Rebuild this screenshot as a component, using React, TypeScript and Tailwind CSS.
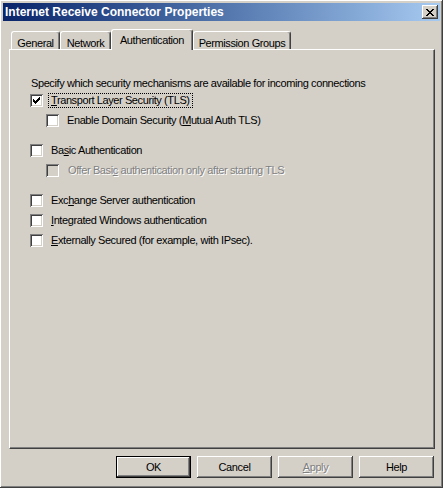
import React from "react";

const raised =
  "shadow-[inset_-1px_-1px_#404040,inset_1px_1px_#ffffff,inset_-2px_-2px_#808080,inset_2px_2px_#d4d0c8]";

function CloseGlyph() {
  const rows = ["11000011", "01100110", "00111100", "00011000", "00111100", "01100110", "11000011"];
  return (
    <svg width="8" height="7" viewBox="0 0 8 7" shapeRendering="crispEdges">
      {rows.map((r, y) =>
        r.split("").map((c, x) => (c === "1" ? <rect key={`${x}-${y}`} x={x} y={y} width="1" height="1" fill="#000" /> : null))
      )}
    </svg>
  );
}

function CheckGlyph({ color }: { color: string }) {
  const rows = ["0000001", "0000011", "1000111", "1101110", "1111100", "0111000", "0010000"];
  return (
    <svg width="7" height="7" viewBox="0 0 7 7" shapeRendering="crispEdges">
      {rows.map((r, y) =>
        r.split("").map((c, x) => (c === "1" ? <rect key={`${x}-${y}`} x={x} y={y} width="1" height="1" fill={color} /> : null))
      )}
    </svg>
  );
}

function Box({ checked = false, disabled = false }: { checked?: boolean; disabled?: boolean }) {
  return (
    <span
      className={`flex w-[13px] h-[13px] shrink-0 items-center justify-center shadow-[inset_1px_1px_#808080,inset_-1px_-1px_#ffffff,inset_2px_2px_#404040,inset_-2px_-2px_#d4d0c8] ${
        disabled ? "bg-[#d4d0c8]" : "bg-white"
      }`}
    >
      {checked && <CheckGlyph color={disabled ? "#808080" : "#000"} />}
    </span>
  );
}

function Tab({ label, width, active = false }: { label: string; width: string; active?: boolean }) {
  return (
    <div
      className={`${width} flex items-start justify-center border-l border-t border-r border-l-white border-t-white border-r-[#404040] rounded-t-[3px] shadow-[inset_-1px_0_#808080] bg-[#d4d0c8] ${
        active ? "relative z-10 h-[21px] -mb-[1px] pt-[2px]" : "h-[18px] pt-[3px]"
      }`}
    >
      {label}
    </div>
  );
}

export default function App() {
  return (
    <div
      className={`w-[443px] h-[488px] bg-[#d4d0c8] p-[3px] flex flex-col text-[11px] tracking-[-0.4px] text-black ${raised}`}
      style={{ fontFamily: '"Liberation Sans", Arial, sans-serif' }}
    >
      <div className="h-[18px] flex items-center justify-between bg-gradient-to-r from-[#0a246a] to-[#a6caf0] pl-[2px] pr-[2px]">
        <span className="font-bold text-white text-[12px] tracking-normal">Internet Receive Connector Properties</span>
        <span className={`w-[16px] h-[14px] flex items-center justify-center bg-[#d4d0c8] ${raised}`}>
          <CloseGlyph />
        </span>
      </div>

      <div className="mt-[8px] ml-[6px] pl-[2px] h-[20px] flex items-end">
        <Tab label="General" width="w-[49px]" />
        <Tab label="Network" width="w-[51px]" />
        <Tab label="Authentication" width="w-[82px]" active />
        <Tab label="Permission Groups" width="w-[98px]" />
      </div>

      <div className="ml-[6px] w-[426px] h-[400px] border-l border-t border-l-white border-t-white border-r border-b border-r-[#404040] border-b-[#404040] shadow-[inset_-1px_-1px_#808080] pl-[20px] pt-[26px] flex flex-col">
        <div className="h-[14px] flex items-center pl-[1px]">
          Specify which security mechanisms are available for incoming connections
        </div>
        <div className="h-[20px] flex items-center">
          <Box checked />
          <span className="ml-[5px] border border-dotted border-black px-[2px] leading-[13px]">
            <u>T</u>ransport Layer Security (TLS)
          </span>
        </div>
        <div className="h-[21px] flex items-center pl-[16px]">
          <Box />
          <span className="ml-[8px]">
            Enable Domain Security (<u>M</u>utual Auth TLS)
          </span>
        </div>

        <div className="mt-[9px] h-[20px] flex items-center">
          <Box />
          <span className="ml-[8px]">
            Ba<u>s</u>ic Authentication
          </span>
        </div>
        <div className="h-[20px] flex items-center pl-[16px]">
          <Box disabled />
          <span className="ml-[9px] text-[#808080] [text-shadow:1px_1px_#ffffff]">
            Offer Basi<u>c</u> authentication only after starting TLS
          </span>
        </div>

        <div className="mt-[10px] h-[20px] flex items-center">
          <Box />
          <span className="ml-[8px]">
            Exc<u>h</u>ange Server authentication
          </span>
        </div>
        <div className="h-[20px] flex items-center">
          <Box />
          <span className="ml-[8px]">
            <u>I</u>ntegrated Windows authentication
          </span>
        </div>
        <div className="h-[20px] flex items-center">
          <Box />
          <span className="ml-[8px]">
            <u>E</u>xternally Secured (for example, with IPsec).
          </span>
        </div>
      </div>

      <div className="mt-[7px] pr-[6px] flex justify-end gap-[6px]">
        <button className="w-[75px] h-[22px] border border-black bg-[#d4d0c8] flex items-center justify-center shadow-[inset_-1px_-1px_#404040,inset_1px_1px_#ffffff,inset_-2px_-2px_#808080]">
          OK
        </button>
        <button className={`w-[75px] h-[22px] bg-[#d4d0c8] flex items-center justify-center ${raised}`}>Cancel</button>
        <button
          className={`w-[75px] h-[22px] bg-[#d4d0c8] flex items-center justify-center text-[#808080] [text-shadow:1px_1px_#ffffff] ${raised}`}
        >
          <span>
            <u>A</u>pply
          </span>
        </button>
        <button className={`w-[75px] h-[22px] bg-[#d4d0c8] flex items-center justify-center ${raised}`}>Help</button>
      </div>
    </div>
  );
}
